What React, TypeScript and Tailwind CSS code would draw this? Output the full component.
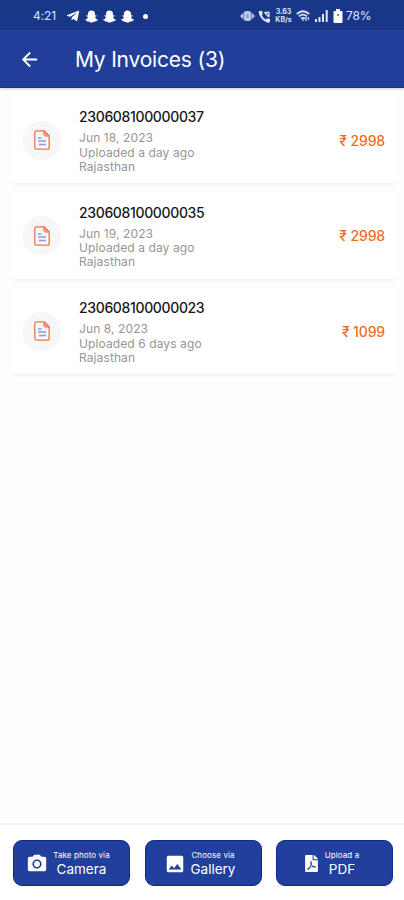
import React from "react";
import { MdArrowBack, MdCameraAlt, MdImage } from "react-icons/md";
import { FaFilePdf, FaSnapchatGhost, FaTelegramPlane } from "react-icons/fa";

type Invoice = { id: string; date: string; uploaded: string; state: string; amount: string };

const invoices: Invoice[] = [
  { id: "230608100000037", date: "Jun 18, 2023", uploaded: "Uploaded a day ago", state: "Rajasthan", amount: "2998" },
  { id: "230608100000035", date: "Jun 19, 2023", uploaded: "Uploaded a day ago", state: "Rajasthan", amount: "2998" },
  { id: "230608100000023", date: "Jun 8, 2023", uploaded: "Uploaded 6 days ago", state: "Rajasthan", amount: "1099" },
];

function InvoiceIcon() {
  return (
    <svg width="16" height="20" viewBox="0 0 16 20" fill="none">
      <path d="M2.5.8h7.7l5 5v11.4a2 2 0 0 1-2 2H2.8a2 2 0 0 1-2-2V2.5C.8 1.5 1.5.8 2.5.8Z" stroke="#ee7450" strokeWidth="1.3" />
      <path d="M9.9.9v3.6c0 1 .6 1.6 1.6 1.6h3.6Z" fill="#f4a184" stroke="#ee7450" strokeWidth="1" />
      <path d="M4 8h3.5M4 11h8M5 14.5h7" stroke="#8b9cc9" strokeWidth="1.6" />
    </svg>
  );
}

function StatusBar() {
  return (
    <div className="flex h-[30px] shrink-0 items-center bg-[#193788] pt-[2px] pl-[33px] text-[#dfe5f5]">
      <span className="w-[33px] text-[12px] leading-none tracking-[-0.1px]">4:21</span>
      <FaTelegramPlane size={14} className="text-white" />
      <FaSnapchatGhost size={13} className="ml-[5px] text-white" />
      <FaSnapchatGhost size={13} className="ml-[5px] text-white" />
      <FaSnapchatGhost size={13} className="ml-[5px] text-white" />
      <span className="ml-[9px] size-[5px] rounded-full bg-white" />
      <svg className="ml-[92px]" width="15" height="12" viewBox="0 0 15 12" fill="#b9c6e6">
        <path d="M0 6l3-3v6ZM15 6l-3-3v6Z" />
        <rect x="3.5" y="1" width="8" height="10" rx="3" />
        <path d="M7.5 4v4" stroke="#8fa1cf" strokeWidth="2" />
      </svg>
      <svg className="ml-[3px]" width="13" height="13" viewBox="0 0 13 13" fill="none" stroke="currentColor">
        <path d="M2 1.5C1.5 6 6 11.5 11 11.5" strokeWidth="2" />
        <path d="M1 1.5h3v3H2ZM8.5 9h3v3H9Z" fill="currentColor" />
        <path d="M6.5 2.5h4.5v4.5M6.500 2.500l4 4" strokeWidth="1.3" />
      </svg>
      <div className="ml-[4px] flex w-[17px] flex-col items-center text-[7px] leading-[8.5px] font-bold">
        <span>3.63</span>
        <span>KB/s</span>
      </div>
      <svg className="ml-[4px]" width="14" height="12" viewBox="0 0 14 12" fill="none" stroke="currentColor" strokeWidth="1.7">
        <path d="M.8 4Q7-1.5 13.2 4M3 6.4Q7 3 11 6.4M5 8.5Q7 7 9 8.5" />
        <path d="M7 11V8M10 7v4M12.3 7v3" strokeWidth="1.2" />
      </svg>
      <svg className="ml-[5px]" width="13" height="12" viewBox="0 0 13 12" fill="currentColor">
        <path d="M0 9h2v3H0zM3.5 7h2v5h-2zM7 4h2v8H7zM10.7 0h2v12h-2z" />
      </svg>
      <svg className="ml-[5px]" width="10" height="14" viewBox="0 0 10 14" fill="#fff">
        <path d="M3 0h4v2h1.5Q9.5 2 9.5 3v10q0 1-1 1h-7q-1 0-1-1V3q0-1 1-1H3z" />
        <path d="M4 5h2v2H4z" fill="#7488bb" />
      </svg>
      <span className="ml-[3px] text-[12px] leading-none tracking-[-0.2px]">78%</span>
    </div>
  );
}

function InvoiceCard({ invoice }: { invoice: Invoice }) {
  return (
    <article className="flex h-[85.5px] items-center rounded-[4px] bg-white pr-[12px] pl-[11px] shadow-[0_2px_3px_rgba(0,0,0,0.05)]">
      <div className="flex size-[39px] shrink-0 items-center justify-center rounded-full bg-[#f7f7f7]">
        <InvoiceIcon />
      </div>
      <div className="ml-[18px] flex-1 pt-[2px] whitespace-nowrap">
        <h2 className="text-[14px] leading-[18px] font-medium tracking-[-0.35px] text-[#171717]">{invoice.id}</h2>
        <div className="mt-[5px] text-[12px] leading-[14.3px] tracking-[0.1px] text-[#969696]">
          <p>{invoice.date}</p>
          <p>{invoice.uploaded}</p>
          <p>{invoice.state}</p>
        </div>
      </div>
      <span className="text-[14px] font-medium tracking-[-0.15px] text-[#ef6c24]">₹ {invoice.amount}</span>
    </article>
  );
}

function UploadButton({ icon, caption, label }: { icon: React.ReactNode; caption: string; label: string }) {
  return (
    <button className="flex h-[46px] w-[117px] items-center justify-center gap-[5px] rounded-[9px] border border-[#14268b] bg-[#213f9c] pt-px pr-[7px] text-white">
      {icon}
      <span className="flex flex-col items-center whitespace-nowrap">
        <span className="text-[8px] leading-[10px] tracking-[0.1px]">{caption}</span>
        <span className="text-[13.5px] leading-[18px]">{label}</span>
      </span>
    </button>
  );
}

export default function App() {
  return (
    <div className="flex h-[900px] w-[404px] flex-col overflow-hidden bg-[#fefefe] font-['Inter','Noto_Sans',sans-serif]">
      <StatusBar />
      <header className="flex h-[58px] shrink-0 items-center border-b border-[#19348b] bg-[#213f9a] pt-[2px] pl-[18px] text-white shadow-[0_1px_3px_rgba(0,0,0,0.2)]">
        <MdArrowBack size={23} />
        <h1 className="ml-[34px] text-[21px] leading-none font-normal tracking-[-0.2px]">My Invoices (3)</h1>
      </header>
      <main className="flex flex-1 flex-col gap-[10px] pt-[9.5px] pr-[7px] pl-[11px]">
        {invoices.map((invoice) => (
          <InvoiceCard key={invoice.id} invoice={invoice} />
        ))}
      </main>
      <footer className="flex h-[77px] shrink-0 justify-between border-t-2 border-[#f4f4f4] bg-white pt-[15px] pr-[11px] pl-[13px]">
        <UploadButton icon={<MdCameraAlt size={22} />} caption="Take photo via" label="Camera" />
        <UploadButton icon={<MdImage size={22} />} caption="Choose via" label="Gallery" />
        <UploadButton icon={<FaFilePdf size={17} />} caption="Upload a" label="PDF" />
      </footer>
    </div>
  );
}
